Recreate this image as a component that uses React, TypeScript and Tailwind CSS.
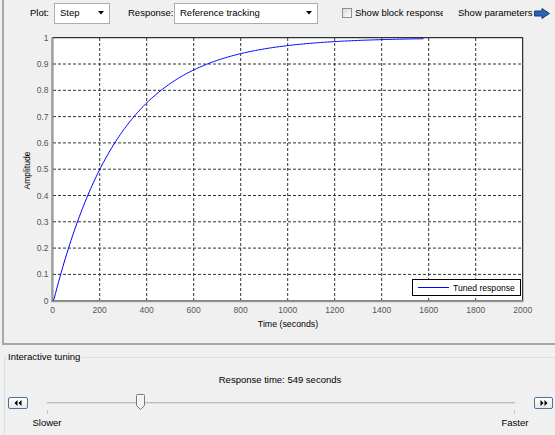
import React from "react";

const X0 = 52.7;
const XS = 0.235; // px per second
const Y0 = 301.7;
const YS = 263; // px per unit amplitude

const xTicks = [0, 200, 400, 600, 800, 1000, 1200, 1400, 1600, 1800, 2000];
const yTicks = [0, 0.1, 0.2, 0.3, 0.4, 0.5, 0.6, 0.7, 0.8, 0.9, 1];

function curvePath() {
  const pts: string[] = [];
  for (let t = 0; t <= 1578; t += 6) {
    const v = t < 4 ? 0 : 1 - Math.exp(-(t - 4) / 284);
    pts.push(`${(X0 + t * XS).toFixed(2)},${(Y0 - v * YS).toFixed(2)}`);
  }
  return "M" + pts.join(" L");
}

function Dropdown({ value, width }: { value: string; width: string }) {
  return (
    <div
      className={`${width} flex h-[21px] items-center justify-between border border-[#acacac] bg-white pl-[5px] pr-[5px]`}
    >
      <span className="whitespace-nowrap">{value}</span>
      <svg width="6" height="4" viewBox="0 0 6 4">
        <polygon points="0,0 6,0 3,3.5" fill="#000" />
      </svg>
    </div>
  );
}

function StepButton({ dir }: { dir: "left" | "right" }) {
  return (
    <div className="flex h-[12px] items-center justify-center rounded-[2px] border border-[#4f7198] bg-gradient-to-b from-white to-[#e6e9ee]">
      <svg width="8" height="6" viewBox="0 0 8 6">
        {dir === "left" ? (
          <>
            <polygon points="3.5,0 3.5,6 0.5,3" fill="#000" />
            <polygon points="7.5,0 7.5,6 4.5,3" fill="#000" />
          </>
        ) : (
          <>
            <polygon points="0.5,0 0.5,6 3.5,3" fill="#000" />
            <polygon points="4.5,0 4.5,6 7.5,3" fill="#000" />
          </>
        )}
      </svg>
    </div>
  );
}

function Chart() {
  return (
    <svg width="551" height="316" className="block">
      <g transform="translate(-4,-27)">
        <rect x={X0} y={38.7} width={470} height={263} fill="#fff" stroke="#000" strokeWidth="1" />
        {xTicks.slice(1, -1).map((t) => (
          <line
            key={t}
            x1={X0 + t * XS}
            x2={X0 + t * XS}
            y1={39}
            y2={301}
            stroke="#333"
            strokeWidth="1"
            strokeDasharray="3 2"
          />
        ))}
        {yTicks.slice(1, -1).map((v) => (
          <line
            key={v}
            x1={53}
            x2={523}
            y1={Y0 - v * YS}
            y2={Y0 - v * YS}
            stroke="#333"
            strokeWidth="1"
            strokeDasharray="3 2"
          />
        ))}
        <line x1={52.2} x2={52.2} y1={38.5} y2={303} stroke="#9a9a9a" strokeWidth="2" />
        <line x1={51.5} x2={523.5} y1={302.2} y2={302.2} stroke="#9a9a9a" strokeWidth="2" />
        <path d={curvePath()} fill="none" stroke="#0000ff" strokeWidth="1" />

        {yTicks.map((v) => (
          <text key={v} x={48.5} y={Y0 - v * YS + 3} fontSize="8.5" fill="#555" textAnchor="end">
            {v === 0 || v === 1 ? String(v) : v.toFixed(1)}
          </text>
        ))}
        {xTicks.map((t) => (
          <text key={t} x={X0 + t * XS} y={314} fontSize="8.5" fill="#555" textAnchor="middle">
            {t}
          </text>
        ))}
        <text x={288} y={328} fontSize="8.8" fill="#000" textAnchor="middle">
          Time (seconds)
        </text>
        <text
          x={0}
          y={0}
          fontSize="8.5"
          fill="#000"
          textAnchor="middle"
          transform="translate(30,171.5) rotate(-90)"
        >
          Amplitude
        </text>

        <rect x={412.5} y={280.5} width={108} height={16} fill="#fff" stroke="#000" strokeWidth="1" />
        <line x1={418} x2={449} y1={288.5} y2={288.5} stroke="#0000ff" strokeWidth="1" />
        <text x={453} y={291.5} fontSize="8.6" fill="#000">
          Tuned response
        </text>
      </g>
    </svg>
  );
}

export default function App() {
  return (
    <div className="flex h-[435px] w-[555px] flex-col overflow-hidden bg-[#f0f0f0] font-['Liberation_Sans',Arial,sans-serif] text-[9.5px] leading-[12px] text-black">
      <div className="ml-[2px] h-[345px] border-b-2 border-l-2 border-[#a8a8a8]">
        <div className="flex h-[26px] items-center pl-[26px]">
          <span className="w-[24px]">Plot:</span>
          <Dropdown value="Step" width="w-[56px]" />
          <span className="ml-[18px] w-[46px]">Response:</span>
          <Dropdown value="Reference tracking" width="w-[144px]" />
          <span className="ml-[24px] h-[10px] w-[10px] border border-[#8e8f8f] bg-gradient-to-br from-[#d8d8d8] to-white" />
          <span className="ml-[3px] w-[88px] overflow-hidden whitespace-nowrap">Show block response</span>
          <span className="ml-[15px] whitespace-nowrap">Show parameters</span>
          <svg width="16" height="11" viewBox="0 0 16 11" className="ml-[2px]">
            <polygon
              points="0.5,3 8,3 8,0.5 15.5,5.5 8,10.5 8,8 0.5,8"
              fill="#2f63b0"
              stroke="#1b3d78"
              strokeWidth="1"
            />
          </svg>
        </div>
        <Chart />
      </div>

      <fieldset className="ml-[4px] mt-[6px] flex-1 rounded-tl-[3px] border-l border-t border-[#d5dfe5]">
        <legend className="ml-[2px] px-[1px]">Interactive tuning</legend>
        <div className="mt-[11px] text-center">Response time: 549 seconds</div>
        <div className="mt-[9px] flex h-[16px] items-center">
          <div className="ml-[3px] w-[20px]">
            <StepButton dir="left" />
          </div>
          <div className="relative ml-[19px] h-[16px] w-[468px]">
            <div className="mt-[7px] h-[2px] border-t border-[#bdbdbd] bg-[#dedede]" />
            <span className="absolute left-0 top-[15px] h-[4px] w-px bg-[#c4c4c4]" />
            <span className="absolute right-0 top-[15px] h-[4px] w-px bg-[#c4c4c4]" />
            <svg width="9" height="16" viewBox="0 0 9 16" className="absolute left-[89px] top-[-1px]">
              <path
                d="M1.5 0.5 H7.5 Q8.5 0.5 8.5 1.5 V11.5 L4.5 15.5 L0.5 11.5 V1.5 Q0.5 0.5 1.5 0.5 Z"
                fill="#f4f4f4"
                stroke="#7a7a7a"
                strokeWidth="1"
              />
              <path d="M2 2 V11 L4.5 13.5" fill="none" stroke="#fff" strokeWidth="1" />
            </svg>
          </div>
          <div className="ml-[19px] w-[19px]">
            <StepButton dir="right" />
          </div>
        </div>
        <div className="ml-[22px] mt-[6px] flex w-[508px] justify-between">
          <span className="w-[40px] text-center">Slower</span>
          <span className="w-[40px] text-center">Faster</span>
        </div>
      </fieldset>
    </div>
  );
}
